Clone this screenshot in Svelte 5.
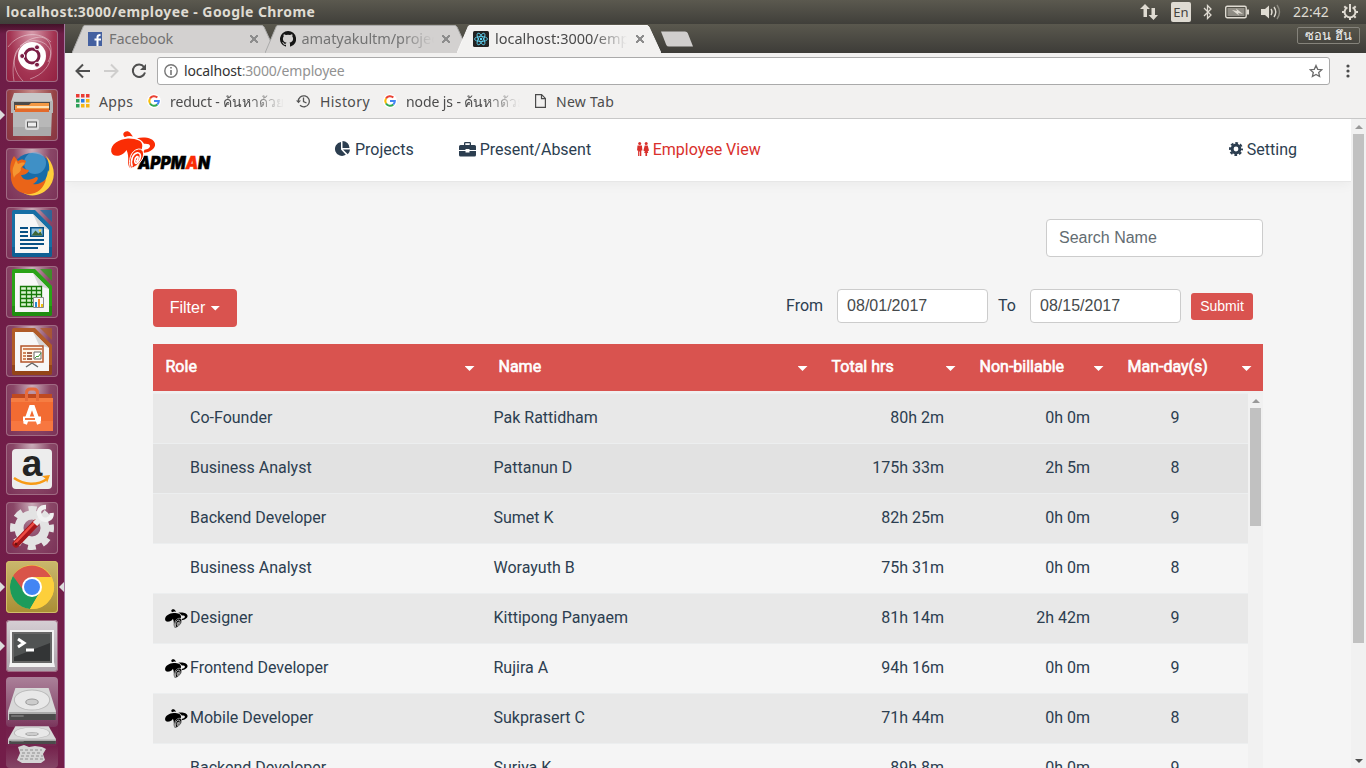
<script>
  const columns = ['Role', 'Name', 'Total hrs', 'Non-billable', 'Man-day(s)'];
  const rows = [
    { role: 'Co-Founder', name: 'Pak Rattidham', total: '80h 2m', non: '0h 0m', days: 9, tone: 'mid' },
    { role: 'Business Analyst', name: 'Pattanun D', total: '175h 33m', non: '2h 5m', days: 8, tone: 'dark' },
    { role: 'Backend Developer', name: 'Sumet K', total: '82h 25m', non: '0h 0m', days: 9, tone: 'mid' },
    { role: 'Business Analyst', name: 'Worayuth B', total: '75h 31m', non: '0h 0m', days: 8, tone: '' },
    { role: 'Designer', name: 'Kittipong Panyaem', total: '81h 14m', non: '2h 42m', days: 9, tone: 'mid', badge: true },
    { role: 'Frontend Developer', name: 'Rujira A', total: '94h 16m', non: '0h 0m', days: 9, tone: '', badge: true },
    { role: 'Mobile Developer', name: 'Sukprasert C', total: '71h 44m', non: '0h 0m', days: 8, tone: 'mid', badge: true },
    { role: 'Backend Developer', name: 'Suriya K', total: '89h 8m', non: '0h 0m', days: 9, tone: '' }
  ];
  const tiles = ['dash', 'files', 'firefox', 'writer', 'calc', 'impress', 'software', 'amazon', 'settings', 'chrome', 'terminal'];
</script>

{#snippet mark(fill, ground)}
  <path {fill} d="M12.300 4C12 1.300 14.500 0 17.300.4l1.600 1.200 3 3.800q-4.500-1-8.200.8z" />
  <path {fill} d="M.2 20.500C-.5 13.500 8 8 17 7.600c4-.1 8 .6 11 2 3.500 1.700 4 5.400 2.500 9.400l-9 3c-2.500 4-3.500 9-2.500 15-1.500-1.500-2-4-1.800-7 .2-3.500 0-7.500-1.700-11-1.500 2.500-3.500 4.500-7 5.500C4 25.500.7 24 .2 20.500z" />
  <path {fill} d="M26 7.300C33 5.500 43 7 44 12.800c.8 4.700-4.500 8.500-12 9.200l1.500-3.200c3-.3 5.500-1.800 5.500-3.700 0-1.800-2.500-2.600-6-2.300-1.500-2.400-3.500-4.200-7-5.500z" />
  <path {fill} stroke={ground} stroke-width="1" d="M19.500 37.300c-2.500-7-.3-18 8-19.300 6-.4 6.500 7 2.500 12-2.500 3-6 6.800-10.500 7.300z" />
  <path fill="none" stroke={ground} stroke-width="1.600" d="M21.200 35.500c-2.200-7 1-13 5.300-13.800 4.500-.2 3.500 7.500-.8 10.500-2.500 1-2.800-4.500.3-6.700 2-.5 1 4-1 4.700" />
{/snippet}

{#snippet google()}
  <svg class="g" width="14" height="14" viewBox="0 0 14 14"><circle cx="7" cy="7" r="7" fill="#fff" /><g fill="none" stroke-width="2.100"><path stroke="#ea4335" d="M3 4.500A4.800 4.800 0 0 1 10.300 3.500" /><path stroke="#fbbc05" d="M3 9.500a4.800 4.800 0 0 1 0-5" /><path stroke="#34a853" d="M10.300 10.500A4.800 4.800 0 0 1 3 9.500" /><path stroke="#4285f4" d="M7 7h4.800a4.800 4.800 0 0 1-1.500 3.500" /></g></svg>
{/snippet}

{#snippet doc(kind, color, dark)}
  <path fill={color} d="M8 3h21l17 17v28q0 2-2 2H8q-2 0-2-2V5q0-2 2-2z" /><path fill={dark} opacity=".5" d="M6 40h40v8q0 2-2 2H8q-2 0-2-2z" />
  <path fill={color} opacity=".75" d="M34 3h11q1 0 1 1v11z" />
  <path fill="#f7f7f7" d="M9 7h18l16 16v23H9z" /><path fill="#d5d5d5" d="M27 7l16 16-10-3z" />
  {#if kind === 'writer'}
    <path stroke={dark} stroke-width="2" d="M14 21h8M14 25h8M14 29h8M14 33h24M14 37h24M14 41h18" /><path fill={dark} d="M24 20h14v10H24z" /><path fill="#8cc2e4" d="M25.500 21.500h11v7h-11z" /><path fill="#3f6636" d="M25.500 28.500l4-5 3 3 2-2 2 4z" /><circle cx="34" cy="23.500" r="1.200" fill="#ffd54a" />
  {:else if kind === 'calc'}
    <path fill="#d9f3d0" d="M15 21h20v19H15z" /><path fill="none" stroke={dark} stroke-width="1.300" d="M14.500 20.500h21v20h-21zM15 24.500h21M15 28.500h21M15 32.500h21M15 36.500h21M20.500 20v20M25.500 20v20M30.500 20v20" /><path fill="#f8f8f8" stroke="#888" d="M27.500 31.500h10v10h-10z" /><path fill="#2589ce" d="M29 36h2v5h-2z" /><path fill="#ef8a2c" d="M32 33h2v8h-2z" /><path fill="#f1c40f" d="M35 38h2v3h-2z" />
  {:else}
    <path fill="#fff4e8" stroke="#b4562b" stroke-width="1.500" d="M15 21h22v16H15z" /><path stroke="#c3622e" stroke-width="1.500" d="M17 24h19M17 28h3M17 31h3M17 34h3" /><path stroke="#84331a" stroke-width="1.500" d="M21 28h5M21 31h5M21 34h5" /><path fill="#fff" stroke="#666" d="M28 27h7v7h-7z" /><path fill="none" stroke="#3d9b35" d="M29 33l2-2 1 1 3-4" /><path stroke="#666" stroke-width="1.500" d="M26 38l-6 4M26 38l6 4" />
  {/if}
{/snippet}

{#snippet tileArt(kind)}
  <svg width="52" height="52" viewBox="0 0 52 52">
    {#if kind === 'dash'}
      <g fill="none" stroke="#fff" opacity=".4"><path d="M8 51C4 27 13 9 34 7c11 1 14 13 8 25M2 17C13 2 34 1 45 12M14 16c12-10 30-5 31 8 0 12-9 21-21 25M17 51C6 40 6 25 13 18" /></g>
      <circle cx="26" cy="26" r="14" fill="#fff" /><circle cx="26" cy="26" r="7" fill="none" stroke="#7b1d45" stroke-width="3" /><g fill="#7b1d45" stroke="#fff" stroke-width="1"><circle cx="16.200" cy="26" r="2.500" /><circle cx="31" cy="17.300" r="2.500" /><circle cx="31" cy="34.700" r="2.500" /></g>
    {:else if kind === 'files'}
      <path fill="#c9c9c9" d="M8 4h37l2 9H5z" /><path fill="#b5b5b5" d="M5 12h42v12H5z" /><path fill="#4d4a48" d="M8 13h36v11H8z" /><path fill="#f49843" d="M9 16h14l2-2h18v9H9z" /><path fill="#ffe0b5" d="M11 17h32v2H11z" /><path fill="#e36a2b" d="M9 20h34v3H9z" /><path fill="#b8b8b8" d="M7 21h2v2h34v-2h3l-1 26H7z" /><path fill="#969696" d="M7 38h38v9H7z" opacity=".4" /><rect x="19" y="30" width="14" height="11" rx="2.500" fill="#dcdcdc" /><rect x="21.500" y="33" width="9" height="5" fill="#eee" stroke="#555" />
    {:else if kind === 'firefox'}
      <circle cx="26" cy="25" r="20" fill="#176ca9" /><circle cx="29" cy="15" r="11" fill="#67b4e4" opacity=".5" /><path fill="#ffcf3b" d="M39 7c9 8 12 21 5 31-7 10-20 12-28 6 17 0 25-10 26-22l1 2c1-7-1-13-4-17z" /><path fill="#ea6418" d="M5 26C3 20 5 12 8 8l4 5c3-2 5-2 8 0-1 3-2 5-4 6 2 2 5 3 7 3-1 4-5 5-8 5 2 6 9 6 15 2 4 0 1 5-3 7 4 1 9-1 13-5-2 11-13 18-23 14C9 43 4 35 5 26z" /><path fill="#f59631" d="M7 20l3-8 2 4c2-1 5-2 7-1-2 3-5 4-4 7-2 4-6 4-7 8-1-3-2-7-1-10z" />
    {:else if kind === 'writer'}{@render doc('writer', '#176fa5', '#075084')}
    {:else if kind === 'calc'}{@render doc('calc', '#2aa318', '#167808')}
    {:else if kind === 'impress'}{@render doc('impress', '#b05b27', '#75300c')}
    {:else if kind === 'software'}
      <path fill="#bf4920" d="M6 10h40v9H6z" /><path fill="#f26b32" d="M5 14h42v33H5z" /><path fill="#f7844a" d="M5 14h42v4H5z" opacity=".7" /><path fill="#ff8a55" opacity=".4" d="M5 37h42v10H5z" /><path fill="none" stroke="#e66b3b" stroke-width="3" d="M20.500 17V9q0-4 4-4h3q4 0 4 4v8" /><path d="M19 40l6-17h2l6 17" fill="none" stroke="#fff" stroke-width="4" /><path stroke="#fff" stroke-width="5" d="M17 35h18" /><path stroke="#f26b32" stroke-width="1.800" d="M19 35h10" />
    {:else if kind === 'amazon'}
      <rect x="6" y="6" width="40" height="40" rx="4" fill="#ededed" /><text x="26" y="33" text-anchor="middle" font-family="Liberation Sans, sans-serif" font-size="37" font-weight="700" fill="#242424">a</text><path fill="none" stroke="#f79b17" stroke-width="2.500" d="M8 35c10 7 23 8 33 1" /><path fill="#f79b17" d="M36 33l8-1-3 8-1-4z" />
    {:else if kind === 'settings'}
      <circle cx="26" cy="26" r="13" fill="none" stroke="#e3e3e3" stroke-width="9" /><circle cx="26" cy="26" r="19" fill="none" stroke="#e3e3e3" stroke-width="6" stroke-dasharray="8 6.920" stroke-dashoffset="4" /><path stroke="#a8161b" stroke-width="7" stroke-linecap="round" d="M10 42L30 21" /><path stroke="#ee4c44" stroke-width="2.500" stroke-linecap="round" d="M9 41l20-21" /><path stroke="#e9e9e9" stroke-width="6" d="M29 22l7-7" /><path fill="none" stroke="#f1f1f1" stroke-width="4.500" d="M40 5c-6 0-8 4-6.500 8 1 4 4.500 5.500 8 4.500 3-.8 4.500-3.500 4-6.500" /><circle cx="10" cy="42" r="1.500" fill="#611" />
    {:else if kind === 'chrome'}
      <circle cx="26" cy="26" r="22" fill="#fdd23c" /><path fill="#d95449" d="M7 15a22 22 0 0 1 38 1H26L16 32z" /><path fill="#1d9b5b" d="M7 15a22 22 0 0 0 17 33l10-17-17-2z" /><path fill="#fdcf3b" d="M45.500 16a22 22 0 0 1-21.500 32l11-19-9-13z" /><circle cx="26" cy="26" r="10" fill="#fff" /><circle cx="26" cy="26" r="8" fill="#4285f4" />
    {:else if kind === 'terminal'}
      <path fill="#f2f2f2" d="M4 10h44v32l1 5H3l1-5z" /><path fill="#666" d="M6 12h40v31H6z" /><path fill="#333536" d="M8 14h36v27H8z" /><path fill="#505353" d="M8 14h36v9L8 37z" /><path fill="none" stroke="#fff" stroke-width="3" d="M12 19l6 4-6 4M20 30h8" />
    {/if}
  </svg>
{/snippet}

{#snippet disk(h)}
  <svg width="52" height={h} viewBox="0 0 50 50" preserveAspectRatio="none"><path fill="#d8d8d8" d="M9 11h32l7 23v9H2v-9z" /><path fill="#4b4b4b" d="M3 37h45v6H3z" /><path fill="#aaa" d="M3 35h45v2H3z" /><ellipse cx="25" cy="23" rx="17" ry="10" fill="#e8e8e8" stroke="#bbb" /><ellipse cx="25" cy="25" rx="6" ry="3" fill="#ccc" stroke="#999" /><path stroke="#999" d="M5 39h12" /></svg>
{/snippet}

<div class="desktop">
  <header class="panel">
    <b>localhost:3000/employee - Google Chrome</b>
    <div class="tray">
      <svg width="18" height="18" viewBox="0 0 18 18"><path fill="#dfdbd2" d="M5 1l5 5H7v8H3.500V6H0zM13.500 17l-5-5h3V5H15v7h3z" /></svg>
      <span class="lang">En</span>
      <svg width="10" height="16" viewBox="0 0 10 16"><path fill="none" stroke="#dfdbd2" stroke-width="1.300" d="M1 4l7 7-3.500 3.500v-13L8 5l-7 7" /></svg>
      <svg width="24" height="14" viewBox="0 0 24 14"><rect x=".7" y="1.200" width="20.500" height="11.500" rx="1.500" fill="none" stroke="#dfdbd2" stroke-width="1.400" /><path fill="#dfdbd2" opacity=".45" d="M2.500 3h17v8h-17z" /><path fill="#dfdbd2" d="M22 4.500h2v5h-2zM7 5l5 1-1-2.500L18 9l-5-1 1 2.500z" /></svg>
      <svg width="20" height="16" viewBox="0 0 20 16"><path fill="#dfdbd2" d="M0 5h4l4-3.500v13L4 11H0z" /><path fill="none" stroke="#dfdbd2" stroke-width="1.400" d="M10 5q2 3 0 6M13 3q3.500 5 0 10" /><path fill="none" stroke="#8b897f" stroke-width="1.400" d="M16 1q5 7 0 14" /></svg>
      <span class="clock">22:42</span>
      <svg width="16" height="16" viewBox="0 0 16 16"><g fill="none" stroke="#dfdbd2"><path stroke-width="1.900" d="M5.400 3.300a5.400 5.400 0 1 0 5.200 0" /><path stroke-width="2" d="M8 0v8M0 8h2.500M13.500 8H16M2.300 2.300l1.800 1.800M13.700 2.300l-1.800 1.800M2.300 13.700l1.800-1.800M13.700 13.700l-1.800-1.800M8 13.500V16" /></g></svg>
    </div>
  </header>

  <div class="below">
    <aside class="launcher">
      {#each tiles as t}
        <div class="tile {t}">
          {@render tileArt(t)}
          {#if t === 'files' || t === 'chrome' || t === 'terminal'}<i class="run"></i>{/if}
          {#if t === 'chrome'}<i class="focus"></i>{/if}
        </div>
      {/each}
      <div class="disk first">{@render disk(50)}</div>
      <div class="disk second">{@render disk(28)}</div>
      <div class="disk third"><svg width="52" height="22" viewBox="0 0 50 22"><path fill="#d5d5d5" d="M11 3l6-2 5 2 6-1 7 1 4 2-3 5 2 6-4 3H15l-5-3 3-7z" /><path stroke="#8f8f8f" stroke-width="1" stroke-dasharray="3 2" d="M13 6h22M15 9h20M14 12h22M13 15h23" fill="none" /></svg></div>
    </aside>

    <main class="browser">
      <div class="tabs">
        <div class="tab">
          <svg class="shape" width="204" height="28" viewBox="0 0 204 28"><path fill="#d3d1d0" stroke="#aaa" d="M0 28L11.500 1Q12 .5 13 .5H190Q191 .5 192 2L204 28" /></svg>
          <svg class="fav" width="14" height="14" viewBox="0 0 14 14"><path fill="#4460a0" d="M0 0h14v14H0z" /><path fill="none" stroke="#fff" stroke-width="2" d="M9.500 14V5q0-2 3-2M6.500 7.500H13" /></svg>
          <span class="fb">Facebook</span><i class="x"></i>
        </div>
        <div class="tab">
          <svg class="shape" width="204" height="28" viewBox="0 0 204 28"><path fill="#d3d1d0" stroke="#aaa" d="M0 28L11.500 1Q12 .5 13 .5H190Q191 .5 192 2L204 28" /></svg>
          <svg class="fav gicon" width="16" height="16" viewBox="0 0 16 16"><path fill="#151515" d="M8 0a8 8 0 0 0-2.500 15.600c.4.100.500-.2.500-.4v-1.400c-2.200.5-2.700-1-2.700-1-.4-.9-.9-1.200-.9-1.200-.7-.5.1-.5.1-.5.800.1 1.200.8 1.200.8.700 1.300 1.900.9 2.300.7.100-.5.300-.9.500-1.100-1.800-.2-3.600-.9-3.600-4 0-.9.300-1.600.8-2.100-.1-.3-.4-1 .1-2.100 0 0 .7-.2 2.200.8a7.700 7.700 0 0 1 4 0c1.500-1 2.200-.8 2.200-.8.500 1.100.2 1.800.1 2.100.5.500.8 1.200.8 2.100 0 3.100-1.900 3.800-3.700 4 .3.300.6.800.6 1.500v2.200c0 .2.100.5.600.4A8 8 0 0 0 8 0z" /></svg>
          <span class="faded gh">amatyakultm/project</span><i class="x"></i>
        </div>
        <div class="tab on">
          <svg class="shape" width="204" height="28" viewBox="0 0 204 28"><path fill="#f2f1f0" stroke="#f8f7f6" d="M0 28L11.500 1Q12 .5 13 .5H190Q191 .5 192 2L204 28" /></svg>
          <svg class="fav" width="16" height="16" viewBox="0 0 16 16"><rect width="16" height="16" rx="1.500" fill="#222" /><g fill="none" stroke="#61dafb" stroke-width=".8"><ellipse cx="8" cy="8" rx="6.500" ry="2.500" /><ellipse cx="8" cy="8" rx="6.500" ry="2.500" transform="rotate(60 8 8)" /><ellipse cx="8" cy="8" rx="6.500" ry="2.500" transform="rotate(120 8 8)" /></g><circle cx="8" cy="8" r="1.200" fill="#61dafb" /></svg>
          <span class="faded lh">localhost:3000/employee</span><i class="x"></i>
        </div>
        <svg class="plus" width="33" height="16" viewBox="0 0 33 16"><path fill="#d0cecd" d="M1 .5h24q2 0 2.700 1.500L33 15.500H9q-2 0-2.700-1.500z" /></svg>
        <span class="profile">ซอน ฮึน</span>
      </div>

      <div class="toolbar">
        <svg width="16" height="16" viewBox="0 0 16 16"><path fill="none" stroke="#4f4f4f" stroke-width="2" d="M15 8H2M8 1.500L1.500 8 8 14.500" /></svg>
        <svg width="16" height="16" viewBox="0 0 16 16"><path fill="none" stroke="#cfcecd" stroke-width="2" d="M1 8h13M8 1.500L14.500 8 8 14.500" /></svg>
        <svg width="16" height="16" viewBox="0 0 16 16"><path fill="none" stroke="#4f4f4f" stroke-width="2" d="M13 4A6.200 6.200 0 1 0 14 9.500" /><path fill="#4f4f4f" d="M15 1v6H9z" /></svg>
        <div class="address">
          <svg width="14" height="14" viewBox="0 0 14 14"><circle cx="7" cy="7" r="6.200" fill="none" stroke="#777" stroke-width="1.400" /><path fill="#777" d="M6.200 3h1.600v1.600H6.200zM6.200 6h1.600v5H6.200z" /></svg>
          <span><em>localhost</em>:3000/employee</span>
          <svg width="14" height="14" viewBox="0 0 14 14"><path fill="none" stroke="#6c6c6c" stroke-width="1.300" d="M7 1.500l1.700 3.800 4.100.4-3.100 2.700.9 4.100L7 10.400l-3.600 2.100.9-4.100-3.100-2.700 4.100-.4z" /></svg>
        </div>
        <svg class="dots" width="4" height="14" viewBox="0 0 4 14"><g fill="#4b4b4b"><circle cx="2" cy="2" r="1.600" /><circle cx="2" cy="7" r="1.600" /><circle cx="2" cy="12" r="1.600" /></g></svg>
      </div>

      <div class="bookmarks">
        <svg width="14" height="14" viewBox="0 0 14 14"><path fill="#ea3b34" d="M0 0h3.500v3.500H0zM5 0h3.500v3.500H5zM10 0h3.500v3.500H10z" /><path fill="#2c9f57" d="M0 5h3.500v3.500H0zM0 10h3.500v3.500H0z" /><path fill="#287de5" d="M5 5h3.500v3.500H5z" /><path fill="#f5b513" d="M10 5h3.500v3.500H10zM5 10h3.500v3.500H5zM10 10h3.500v3.500H10z" /></svg>
        <span class="apps">Apps</span>
        {@render google()}<span class="faded mark1">reduct - ค้นหาด้วย</span>
        <svg width="14" height="14" viewBox="0 0 14 14"><path fill="none" stroke="#555" stroke-width="1.300" d="M2.300 7.500A5.500 5.500 0 1 1 4 11.300M7.500 3.500v4l3 1.500" /><path fill="#555" d="M0 6.500h5L2.500 9.300z" /></svg>
        <span class="hist">History</span>
        {@render google()}<span class="faded mark2">node js - ค้นหาด้วย</span>
        <svg class="sheet" width="11" height="14" viewBox="0 0 11 14"><path fill="none" stroke="#4b4b4b" stroke-width="1.200" d="M.6.600h6L10.400 4.400v9H.6zM6.500.6v4h4" /></svg>
        <span class="newtab">New Tab</span>
      </div>

      <div class="viewport">
        <div class="page">
          <nav>
            <svg class="logo" width="101" height="40" viewBox="0 0 101 40">
              <text x="27" y="38" class="word" textLength="72" lengthAdjust="spacingAndGlyphs">APPM<tspan fill="#fa2d05" stroke="#fa2d05">A</tspan>N</text>
              {@render mark('#fa2d05', '#fff')}
            </svg>
            <span class="item projects"><svg width="16" height="16" viewBox="0 0 16 16"><path fill="#2c3e50" d="M7 1v7.500l4.800 5.300A7 7 0 1 1 7 1z" /><path fill="#2c3e50" d="M8.500 0a7 7 0 0 1 7 7h-7zM9 8.500h7a7 7 0 0 1-2.200 4.700z" /></svg><span>Projects</span></span>
            <span class="item present"><svg width="17" height="15" viewBox="0 0 17 15"><path fill="#2c3e50" d="M5 3V1.200Q5 0 6.200 0h4.600Q12 0 12 1.200V3h3.500Q17 3 17 4.500V8h-6.500V7h-4v1H0V4.500Q0 3 1.500 3zm1.300 0h4.400V1.300H6.300zM0 9h6.500v1.500h4V9H17v4q0 1.500-1.500 1.500h-14Q0 14.500 0 13z" /></svg><span>Present/Absent</span></span>
            <span class="item employee"><svg width="12" height="14" viewBox="0 0 12 14"><g fill="#d9302c"><circle cx="2.700" cy="1.500" r="1.500" /><circle cx="9.200" cy="1.500" r="1.500" /><path d="M.5 3.600h4.400l.5 5H4.300V14H3V9.500h-.6V14H1.100V8.600H0zM7.700 3.600h3L12 8.500l-.8.500h-.5l.6 2h-1.200v3H8.400v-3H7.200l.6-2h-.6l-.8-.5z" /></g></svg><span>Employee View</span></span>
            <span class="item setting"><svg width="14" height="14" viewBox="0 0 14 14"><circle cx="7" cy="7" r="3.900" fill="none" stroke="#2c3e50" stroke-width="3" /><circle cx="7" cy="7" r="6" fill="none" stroke="#2c3e50" stroke-width="2" stroke-dasharray="2.700 2.010" stroke-dashoffset="1.350" /></svg><span>Setting</span></span>
          </nav>

          <section>
            <div class="search"><input placeholder="Search Name" /></div>
            <div class="controls">
              <button class="filter">Filter<i class="caret"></i></button>
              <div class="range">
                <label for="from">From</label><input id="from" value="08/01/2017" />
                <label for="to">To</label><input id="to" value="08/15/2017" />
                <button class="submit">Submit</button>
              </div>
            </div>
            <div class="thead">
              {#each columns as c}<div><span>{c}</span><i class="caret"></i></div>{/each}
            </div>
            <div class="tbody">
              <div class="rows">
                {#each rows as r}
                  <div class="row {r.tone}">
                    <span class="badge">{#if r.badge}<svg width="23" height="20" viewBox="0 0 45 39">{@render mark('#000', '#e8e8e8')}</svg>{/if}</span>
                    <span>{r.role}</span><span>{r.name}</span><span class="num">{r.total}</span><span class="num">{r.non}</span><span class="days">{r.days}</span>
                  </div>
                {/each}
              </div>
              <div class="scroll inner"><i class="up"></i><div class="thumb"></div></div>
            </div>
          </section>
        </div>
        <div class="scroll outer"><i class="up"></i><div class="thumb"></div><i class="down"></i></div>
      </div>
    </main>
  </div>
</div>

<style>
  :global(body) { margin: 0; overflow: hidden; }
  * { box-sizing: border-box; }
  svg { display: block; flex: none; }
  .desktop { width: 1366px; height: 768px; display: flex; flex-direction: column; overflow: hidden; font: 15px "Noto Sans", "Open Sans", sans-serif; }
  .panel { height: 24px; flex: none; display: flex; justify-content: space-between; align-items: center; padding: 0 8px 0 6px; background: linear-gradient(#5b594f, #403f3a); color: #dfdbd2; }
  .panel b { font-size: 14px; font-weight: 700; letter-spacing: .42px; line-height: 24px; white-space: nowrap; }
  .tray { display: flex; align-items: center; }
  .lang { width: 20px; height: 20px; margin: 0 12px 0 13px; border-radius: 2px; background: #dfdbd2; color: #45433e; font-size: 13px; line-height: 20px; text-align: center; }
  .tray svg:nth-of-type(3) { margin: 0 12px; }
  .clock { width: 37px; margin: 0 12px; padding-bottom: 2px; font-size: 14px; }
  .below { display: flex; height: 744px; }
  .launcher { width: 65px; height: 744px; flex: none; padding: 6px 0 0 6px; display: flex; flex-direction: column; gap: 7px; background: linear-gradient(#431229, #6e1d47 10px, #731d49); border-right: 1px solid #a676a0; overflow: hidden; }
  .tile { position: relative; width: 52px; height: 52px; flex: none; border-radius: 4px; background: radial-gradient(ellipse at 50% 0, #cbaeba, #8a4767 50%, #7a3157); box-shadow: inset 0 0 0 1px #a06a83; }
  .tile.dash { background: radial-gradient(ellipse at 50% 0, #d89bac, #a33452 60%, #921f40); }
  .tile.files { background: radial-gradient(ellipse at 50% 0, #c88e8b, #964345 60%, #863442); }
  .tile.chrome { background: linear-gradient(#cab76d, #a98e34); box-shadow: inset 0 0 0 1px #d2bd68; }
  .tile.terminal { background: linear-gradient(#d6cfd4, #aaa0a8); }
  .run, .focus { position: absolute; top: 21px; border: 5px solid transparent; }
  .run { left: -6px; border-left-color: #ddd; border-right: 0; }
  .focus { right: -6px; border-right-color: #ddd; border-left: 0; }
  .disk { width: 52px; height: 50px; flex: none; border-radius: 4px; background: linear-gradient(#ab8099, #7c3b60); }
  .disk.first { margin-top: -2px; height: 50px; }
  .disk.second { height: 26px; margin-top: -14px; overflow: hidden; background: linear-gradient(#8a4a6b00, #75254f); }
  .disk.third { margin-top: -9px; height: 24px; background: linear-gradient(#752a5000, #854666); }
  .browser { width: 1301px; display: flex; flex-direction: column; background: #f2f1f0; color: #4c4c4c; }
  .tabs { height: 29px; flex: none; display: flex; padding: 1px 6px 0 7px; background: linear-gradient(#5a584e, #3d3c38); }
  .tab { position: relative; width: 204.500px; height: 28px; flex: none; margin-right: -12px; display: flex; align-items: center; padding: 0 18px 0 16px; color: #737373; white-space: nowrap; }
  .tab.on { z-index: 1; color: #4a4a4a; margin-right: 0; }
  .tab > * { position: relative; }
  .tab .shape { position: absolute; left: 0; top: 0; }
  .tab span { margin-left: 6px; padding-bottom: 2px; flex: 1; font-size: 14.500px; overflow: hidden; }
  .tab .fb { margin-left: 7px; letter-spacing: -.1px; }
  .tab .gicon { margin-left: -1px; }
  .tab .gh { letter-spacing: -.05px; }
  .faded { overflow: hidden; white-space: nowrap; mask-image: linear-gradient(90deg, #000 calc(100% - 34px), transparent); }
  .x { width: 8px; height: 8px; margin-left: 8px; margin-right: 1px; background: linear-gradient(45deg, transparent 43%, #8d8d8d 43% 57%, transparent 57%), linear-gradient(-45deg, transparent 43%, #8d8d8d 43% 57%, transparent 57%); }
  .on .x { margin-left: 9px; margin-right: 0; }
  .plus { margin: 6px auto 0 -2px; }
  .profile { width: 63px; height: 17px; margin-top: 2px; border: 1px solid #85837b; border-radius: 2px; color: #eee; font-size: 13px; line-height: 14px; text-align: center; white-space: nowrap; }
  .toolbar { height: 32px; margin-top: 2px; flex: none; display: flex; align-items: center; gap: 12px; padding: 0 16px 0 10px; }
  .address { flex: 1; height: 28px; margin-left: -2px; padding: 0 6px; display: flex; align-items: center; gap: 6px; background: #fff; border: 1px solid #aaa; border-radius: 3px; color: #929292; font-size: 14px; letter-spacing: -.17px; }
  .address span { flex: 1; padding-bottom: 1px; }
  .address em { font-style: normal; color: #333; }
  .dots { margin-left: 4px; }
  .bookmarks { flex: 1; min-height: 0; display: flex; align-items: center; padding: 0 11px 3px; border-bottom: 1px solid #c8c8c8; font-size: 14px; white-space: nowrap; }
  .bookmarks .apps { width: 48px; margin-left: 9px; letter-spacing: .4px; }
  .bookmarks .faded { width: 114px; margin-left: 9px; padding-top: 1px; letter-spacing: -.1px; }
  .bookmarks .mark1 { margin-right: 12px; }
  .bookmarks .hist { width: 63px; margin: 0 0 0 10px; letter-spacing: .4px; }
  .bookmarks .mark2 { margin-right: 15px; }
  .newtab { letter-spacing: .3px; }
  .sheet { margin-right: 10px; }
  .viewport { height: 649px; flex: none; display: flex; background: #f5f5f5; }
  .page { width: 1286px; overflow: hidden; color: #2c3e50; font: 16px/24px Roboto, sans-serif; }
  nav { height: 63px; display: flex; align-items: center; padding: 0 54px 2px 46px; background: #fff; border-bottom: 1px solid #e7e7e7; box-shadow: 0 2px 12px rgba(0,0,0,.05); }
  .logo { margin-top: 4px; overflow: visible; }
  .word { font: italic 900 17px Inter, "Liberation Sans", sans-serif; stroke: #000; stroke-width: .5; }
  .item { display: flex; align-items: center; gap: 4px; white-space: nowrap; }
  .item span { padding-top: 2px; }
  .projects { margin-left: 122px; gap: 5px; }
  .present { margin-left: 45px; }
  .employee { margin-left: 45.500px; color: #d9302c; }
  .setting { margin-left: auto; }
  section { width: 1110px; margin: 37px 0 0 88px; }
  input { width: 151px; height: 34px; margin: 0; padding: 0 9px; border: 1px solid #ccc; border-radius: 4px; background: #fff; color: #464a4c; font: 16px "Liberation Sans", sans-serif; }
  .search { display: flex; justify-content: flex-end; }
  .search input { width: 217px; height: 38px; padding: 0 12px; }
  input::placeholder { color: #636c72; opacity: 1; }
  .controls { display: flex; justify-content: space-between; align-items: flex-start; height: 55px; margin-top: 32px; }
  button { display: flex; align-items: center; justify-content: center; padding: 0; border: 0; border-radius: 4px; background: #d9534f; color: #fff; font: 16px "Liberation Sans", sans-serif; }
  .filter { width: 84px; height: 38px; gap: 5px; }
  .caret { width: 10px; height: 5px; background: #fff; clip-path: polygon(0 0, 100% 0, 50% 100%); }
  .thead .caret { margin-top: 2px; }
  .range { display: flex; align-items: center; padding-right: 10px; }
  #from { margin: 0 10px 0 14px; }
  #to { margin: 0 10px 0 14px; }
  .submit { width: 62px; height: 27px; margin-top: 1px; padding-bottom: 1px; border-radius: 3px; font-size: 14px; }
  .thead { height: 47px; display: grid; grid-template-columns: 333px 333px 148px 148px 148px; background: #d9534f; color: #fff; -webkit-text-stroke: .6px #fff; }
  .thead div { display: flex; align-items: center; justify-content: space-between; padding: 0 11.500px 0 12.500px; }
  .thead span { padding-bottom: 1px; }
  .tbody { height: 600px; display: flex; background: #f0f0f0; padding-top: 2px; }
  .rows { width: 1095px; }
  .row { height: 50px; display: grid; grid-template-columns: 25px 303.500px 304.500px 146px 146px 89.500px; padding: 0 0 2px 12px; align-items: center; border-top: 1px solid #eceeef; background: #f5f5f5; }
  .badge { padding-top: 3px; }
  .mid { background: #e8e8e8; }
  .dark { background: #e2e2e2; }
  .num { text-align: right; }
  .days { text-align: right; }
  .scroll { width: 15px; background: #f1f1f1; display: flex; flex-direction: column; align-items: center; }
  .scroll i { width: 0; height: 0; border: 4px solid transparent; }
  .scroll .up { border-bottom-color: #999; border-top: 0; margin: 6px 0 5px; }
  .thumb { width: 11px; height: 509px; background: #c1c1c1; }
  .inner .thumb { height: 118px; }
  .outer .down { border-top-color: #505050; border-bottom: 0; margin: auto 0 5px; }
</style>
